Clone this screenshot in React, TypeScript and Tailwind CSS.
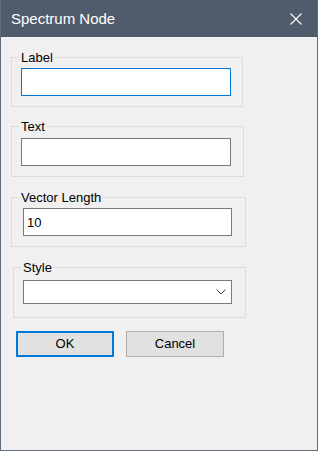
import { useState } from "react";

const font = { fontFamily: '"Liberation Sans", Arial, sans-serif' };

const Group = ({
  label,
  className,
  inner,
  children,
}: {
  label: string;
  className: string;
  inner: string;
  children: React.ReactNode;
}) => (
  <fieldset className={`border border-[#dcdcdc] ${className}`}>
    <legend className="ml-[7px] px-[2px] text-[13px] leading-[15px] text-black">{label}</legend>
    <div className={inner}>{children}</div>
  </fieldset>
);

const App = () => {
  const [label, setLabel] = useState("");
  const [text, setText] = useState("");
  const [length, setLength] = useState("10");

  return (
    <div className="w-[318px] h-[451px] flex flex-col bg-[#505c6c] border-x border-b border-[#5f6c7b]" style={font}>
      <div className="h-[37px] shrink-0 flex items-center justify-between pl-[10px] pr-[15px]">
        <span className="text-[15px] text-white mt-[1px]">Spectrum Node</span>
        <svg width="12" height="12" viewBox="0 0 12 12" className="text-white">
          <path d="M0.5 0.5 L11.5 11.5 M11.5 0.5 L0.5 11.5" stroke="currentColor" strokeWidth="1.1" />
        </svg>
      </div>

      <div className="flex-1 bg-[#f0f0f0] pt-[13px]">
        <Group label="Label" className="ml-[10px] w-[232px]" inner="pl-[9px] pt-[3px] pb-[10px]">
          <input
            value={label}
            onChange={(e) => setLabel(e.target.value)}
            className="block w-[210px] h-[28px] bg-white border border-[#0078d7] px-[3px] text-[13px] outline-none"
          />
        </Group>

        <Group label="Text" className="ml-[10px] mt-[12px] w-[233px]" inner="pl-[9px] pt-[4px] pb-[10px]">
          <input
            value={text}
            onChange={(e) => setText(e.target.value)}
            className="block w-[210px] h-[28px] bg-white border border-[#7a7a7a] px-[3px] text-[13px] outline-none"
          />
        </Group>

        <Group label="Vector Length" className="ml-[10px] mt-[13px] w-[235px]" inner="pl-[11px] pt-[3px] pb-[10px]">
          <input
            value={length}
            onChange={(e) => setLength(e.target.value)}
            className="block w-[209px] h-[28px] bg-white border border-[#7a7a7a] px-[3px] text-[13px] text-black outline-none"
          />
        </Group>

        <Group label="Style" className="ml-[12px] mt-[13px] w-[233px]" inner="pl-[9px] pt-[5px] pb-[13px]">
          <div className="w-[209px] h-[24px] bg-white border border-[#7a7a7a] flex items-center justify-end pr-[5px]">
            <svg width="10" height="6" viewBox="0 0 10 6">
              <path d="M0.5 0.5 L5 5 L9.5 0.5" fill="none" stroke="#444" strokeWidth="1" />
            </svg>
          </div>
        </Group>

        <div className="flex gap-[12px] ml-[15px] mt-[13px]">
          <button className="w-[98px] h-[26px] bg-[#e1e1e1] border-2 border-[#0078d7] text-[13px] text-black">
            OK
          </button>
          <button className="w-[98px] h-[26px] bg-[#e1e1e1] border border-[#adadad] text-[13px] text-black">
            Cancel
          </button>
        </div>
      </div>
    </div>
  );
};

export default App;
